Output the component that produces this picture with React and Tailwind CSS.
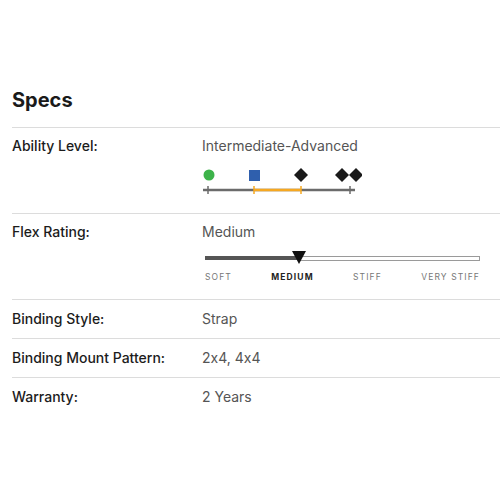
import React from 'react'

const font = { fontFamily: 'Inter, "Noto Sans", sans-serif', fontFeatureSettings: '"calt" 0' }

function AbilityScale() {
  return (
    <svg width="162" height="30" viewBox="0 0 162 30" className="block">
      {/* track */}
      <line x1="3" y1="24" x2="155" y2="24" stroke="#6b6b6b" strokeWidth="2.5" />
      <line x1="54" y1="24" x2="101" y2="24" stroke="#f6a821" strokeWidth="2.5" />
      <line x1="8" y1="20" x2="8" y2="28" stroke="#6b6b6b" strokeWidth="1.5" />
      <line x1="150" y1="20" x2="150" y2="28" stroke="#6b6b6b" strokeWidth="1.5" />
      <line x1="54" y1="20" x2="54" y2="28" stroke="#f6a821" strokeWidth="1.5" />
      <line x1="101" y1="20" x2="101" y2="28" stroke="#f6a821" strokeWidth="1.5" />
      {/* markers */}
      <circle cx="9" cy="9" r="5.5" fill="#3db34a" />
      <rect x="49" y="4" width="11" height="11" fill="#2f5fad" />
      <polygon points="101,2 108,9 101,16 94,9" fill="#1a1a1a" />
      <polygon points="142,2 149,9 142,16 135,9" fill="#1a1a1a" />
      <polygon points="156,2 163,9 156,16 149,9" fill="#1a1a1a" />
    </svg>
  )
}

function FlexScale() {
  return (
    <div className="w-[278px] pl-[3px]">
      <div className="relative flex items-center h-[14px]">
        <div className="h-[4px] w-[94px] bg-[#555]" />
        <div className="h-[5px] flex-1 border border-[#9a9a9a] bg-white" />
        <svg width="14" height="13" viewBox="0 0 14 13" className="absolute left-[87px] top-0">
          <polygon points="0,0 14,0 7,13" fill="#111" />
        </svg>
      </div>
      <div className="flex justify-between mt-[6px] text-[8.5px] tracking-[0.13em] text-[#777]">
        <span>SOFT</span>
        <span className="font-bold text-[#222]">MEDIUM</span>
        <span>STIFF</span>
        <span>VERY STIFF</span>
      </div>
    </div>
  )
}

function Row({ label, children, className }) {
  return (
    <div className={'grid grid-cols-[190px_1fr] border-t border-[#dcdcdc] ' + (className || '')}>
      <div className="text-[14px] font-medium text-[#1c1c1c]">{label}</div>
      <div className="text-[14px] text-[#555]">{children}</div>
    </div>
  )
}

export default function App() {
  return (
    <div className="w-[500px] h-[500px] bg-white pl-3 pt-[87px]" style={font}>
      <h2 className="text-[20px] font-bold text-[#1a1a1a] leading-[26px] mb-[14px]">Specs</h2>

      <Row label="Ability Level:" className="pt-[7px] h-[86px]">
        <div>Intermediate-Advanced</div>
        <div className="mt-[10px] -ml-[2px]">
          <AbilityScale />
        </div>
      </Row>

      <Row label="Flex Rating:" className="pt-[7px] h-[86px]">
        <div>Medium</div>
        <div className="mt-[9px]">
          <FlexScale />
        </div>
      </Row>

      <Row label="Binding Style:" className="pt-[8px] h-[39px]">
        Strap
      </Row>

      <Row label="Binding Mount Pattern:" className="pt-[8px] h-[39px]">
        2x4, 4x4
      </Row>

      <Row label="Warranty:" className="pt-[8px] h-[39px]">
        2 Years
      </Row>
    </div>
  )
}
